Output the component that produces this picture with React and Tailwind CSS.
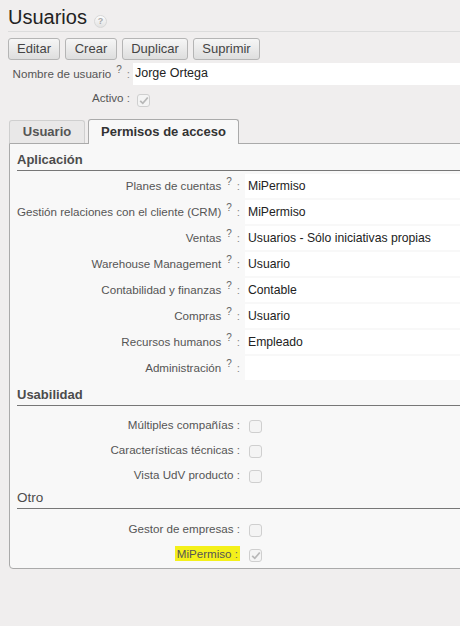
import React from "react";

const Q = () => (
  <span className="relative -top-[5px] ml-[5px] text-[10px] text-[#666]">?</span>
);

function SelectRow({ label, value }) {
  return (
    <div className="flex h-[26px] items-center">
      <div className="w-[223px] shrink-0 whitespace-nowrap text-right text-[11.6px] text-[#555]">
        {label}
        <Q />
        <span className="ml-[5px] text-[#888]">:</span>
      </div>
      <div className="ml-[5px] flex h-[24px] flex-1 items-center bg-white pl-[3px] text-[12.2px] text-[#222]">
        {value}
      </div>
    </div>
  );
}

function Check({ checked }) {
  return (
    <span className="flex h-[13px] w-[13px] items-center justify-center rounded-[3px] border border-[#cfcfcf] bg-[#f4f4f4]">
      {checked && (
        <svg width="10" height="9" viewBox="0 0 10 9">
          <path d="M1.2 4.8 L3.8 7.3 L8.8 1.5" fill="none" stroke="#b8b8b8" strokeWidth="1.8" />
        </svg>
      )}
    </span>
  );
}

function CheckRow({ label, checked, highlight }) {
  return (
    <div className="flex h-[25px] items-center">
      <div className="w-[223px] shrink-0 whitespace-nowrap text-right text-[11.6px] text-[#555]">
        <span className={highlight ? "bg-[#f4f01a] px-[2px] py-[1px]" : ""}>
          {label} <span className="text-[#666]">:</span>
        </span>
      </div>
      <div className="ml-[9px] mt-[3px]">
        <Check checked={checked} />
      </div>
    </div>
  );
}

function Btn({ children, w }) {
  return (
    <div
      className={`${w} flex h-[22px] items-center justify-center rounded-[3px] border border-[#b5b5b5] bg-gradient-to-b from-[#f6f6f6] to-[#dedede] text-[13px] text-[#444]`}
    >
      {children}
    </div>
  );
}

export default function App() {
  return (
    <div
      className="h-[626px] w-[460px] overflow-hidden bg-[#f0eeee] text-[#4c4c4c]"
      style={{ fontFamily: '"Liberation Sans", Arial, sans-serif' }}
    >
      <div className="ml-[8px] flex h-[32px] items-end border-b border-[#dcdcdc] pb-[2px]">
        <span className="text-[20px] leading-[24px] text-[#222]">Usuarios</span>
        <span className="mb-[1px] ml-[7px] flex h-[13px] w-[13px] items-center justify-center rounded-full border border-[#d8d8d8] bg-gradient-to-b from-[#fdfdfd] to-[#e2e2e2] text-[9px] font-bold text-[#aaa]">
          ?
        </span>
      </div>
      <div className="ml-[8px] mt-[6px] flex gap-[5px]">
        <Btn w="w-[52px]">Editar</Btn>
        <Btn w="w-[52px]">Crear</Btn>
        <Btn w="w-[66px]">Duplicar</Btn>
        <Btn w="w-[67px]">Suprimir</Btn>
      </div>
      <div className="mt-[2px] flex h-[23px] items-center">
        <div className="w-[130px] shrink-0 whitespace-nowrap text-right text-[11.6px] text-[#555]">
          Nombre de usuario
          <Q />
          <span className="ml-[5px] text-[#888]">:</span>
        </div>
        <div className="ml-[3px] flex h-[22px] flex-1 items-center bg-white pl-[2px] text-[12.5px] text-[#222]">
          Jorge Ortega
        </div>
      </div>
      <div className="mt-[2px] flex h-[22px] items-center">
        <div className="w-[130px] shrink-0 text-right text-[11.6px] text-[#555]">
          Activo <span className="text-[#666]">:</span>
        </div>
        <div className="ml-[7px] mt-[4px]">
          <Check checked />
        </div>
      </div>
      <div className="ml-[9px] mt-[10px] flex items-end gap-[3px]">
        <div className="flex h-[23px] w-[76px] items-center justify-center rounded-t-[3px] border border-b-0 border-[#cfcfcf] bg-[#e9e8e8] text-[13px] font-bold text-[#555]">
          Usuario
        </div>
        <div className="relative -mb-px flex h-[25px] w-[151px] items-center justify-center rounded-t-[3px] border border-b-0 border-[#aaa] bg-[#f8f8f8] text-[13px] font-bold text-[#333]">
          Permisos de acceso
        </div>
      </div>
      <div className="ml-[9px] h-[426px] w-[470px] rounded-bl-[4px] border border-[#aaa] bg-[#f8f8f8] pl-[7px] pt-[5px]">
        <div className="flex h-[22px] items-center border-b border-[#777] text-[13px] font-bold text-[#4c4c4c]">
          Aplicación
        </div>
        <div className="mt-[2px]">
          <SelectRow label="Planes de cuentas" value="MiPermiso" />
          <SelectRow label="Gestión relaciones con el cliente (CRM)" value="MiPermiso" />
          <SelectRow label="Ventas" value="Usuarios - Sólo iniciativas propias" />
          <SelectRow label="Warehouse Management" value="Usuario" />
          <SelectRow label="Contabilidad y finanzas" value="Contable" />
          <SelectRow label="Compras" value="Usuario" />
          <SelectRow label="Recursos humanos" value="Empleado" />
          <SelectRow label="Administración" value="" />
        </div>
        <div className="mt-[3px] flex h-[22px] items-center border-b border-[#777] text-[13px] font-bold text-[#4c4c4c]">
          Usabilidad
        </div>
        <div className="mt-[6px]">
          <CheckRow label="Múltiples compañías" />
          <CheckRow label="Características técnicas" />
          <CheckRow label="Vista UdV producto" />
        </div>
        <div className="mt-[1px] flex h-[21px] items-center border-b border-[#777] text-[13.5px] text-[#4c4c4c]">
          Otro
        </div>
        <div className="mt-[7px]">
          <CheckRow label="Gestor de empresas" />
          <CheckRow label="MiPermiso" checked highlight />
        </div>
      </div>
    </div>
  );
}
